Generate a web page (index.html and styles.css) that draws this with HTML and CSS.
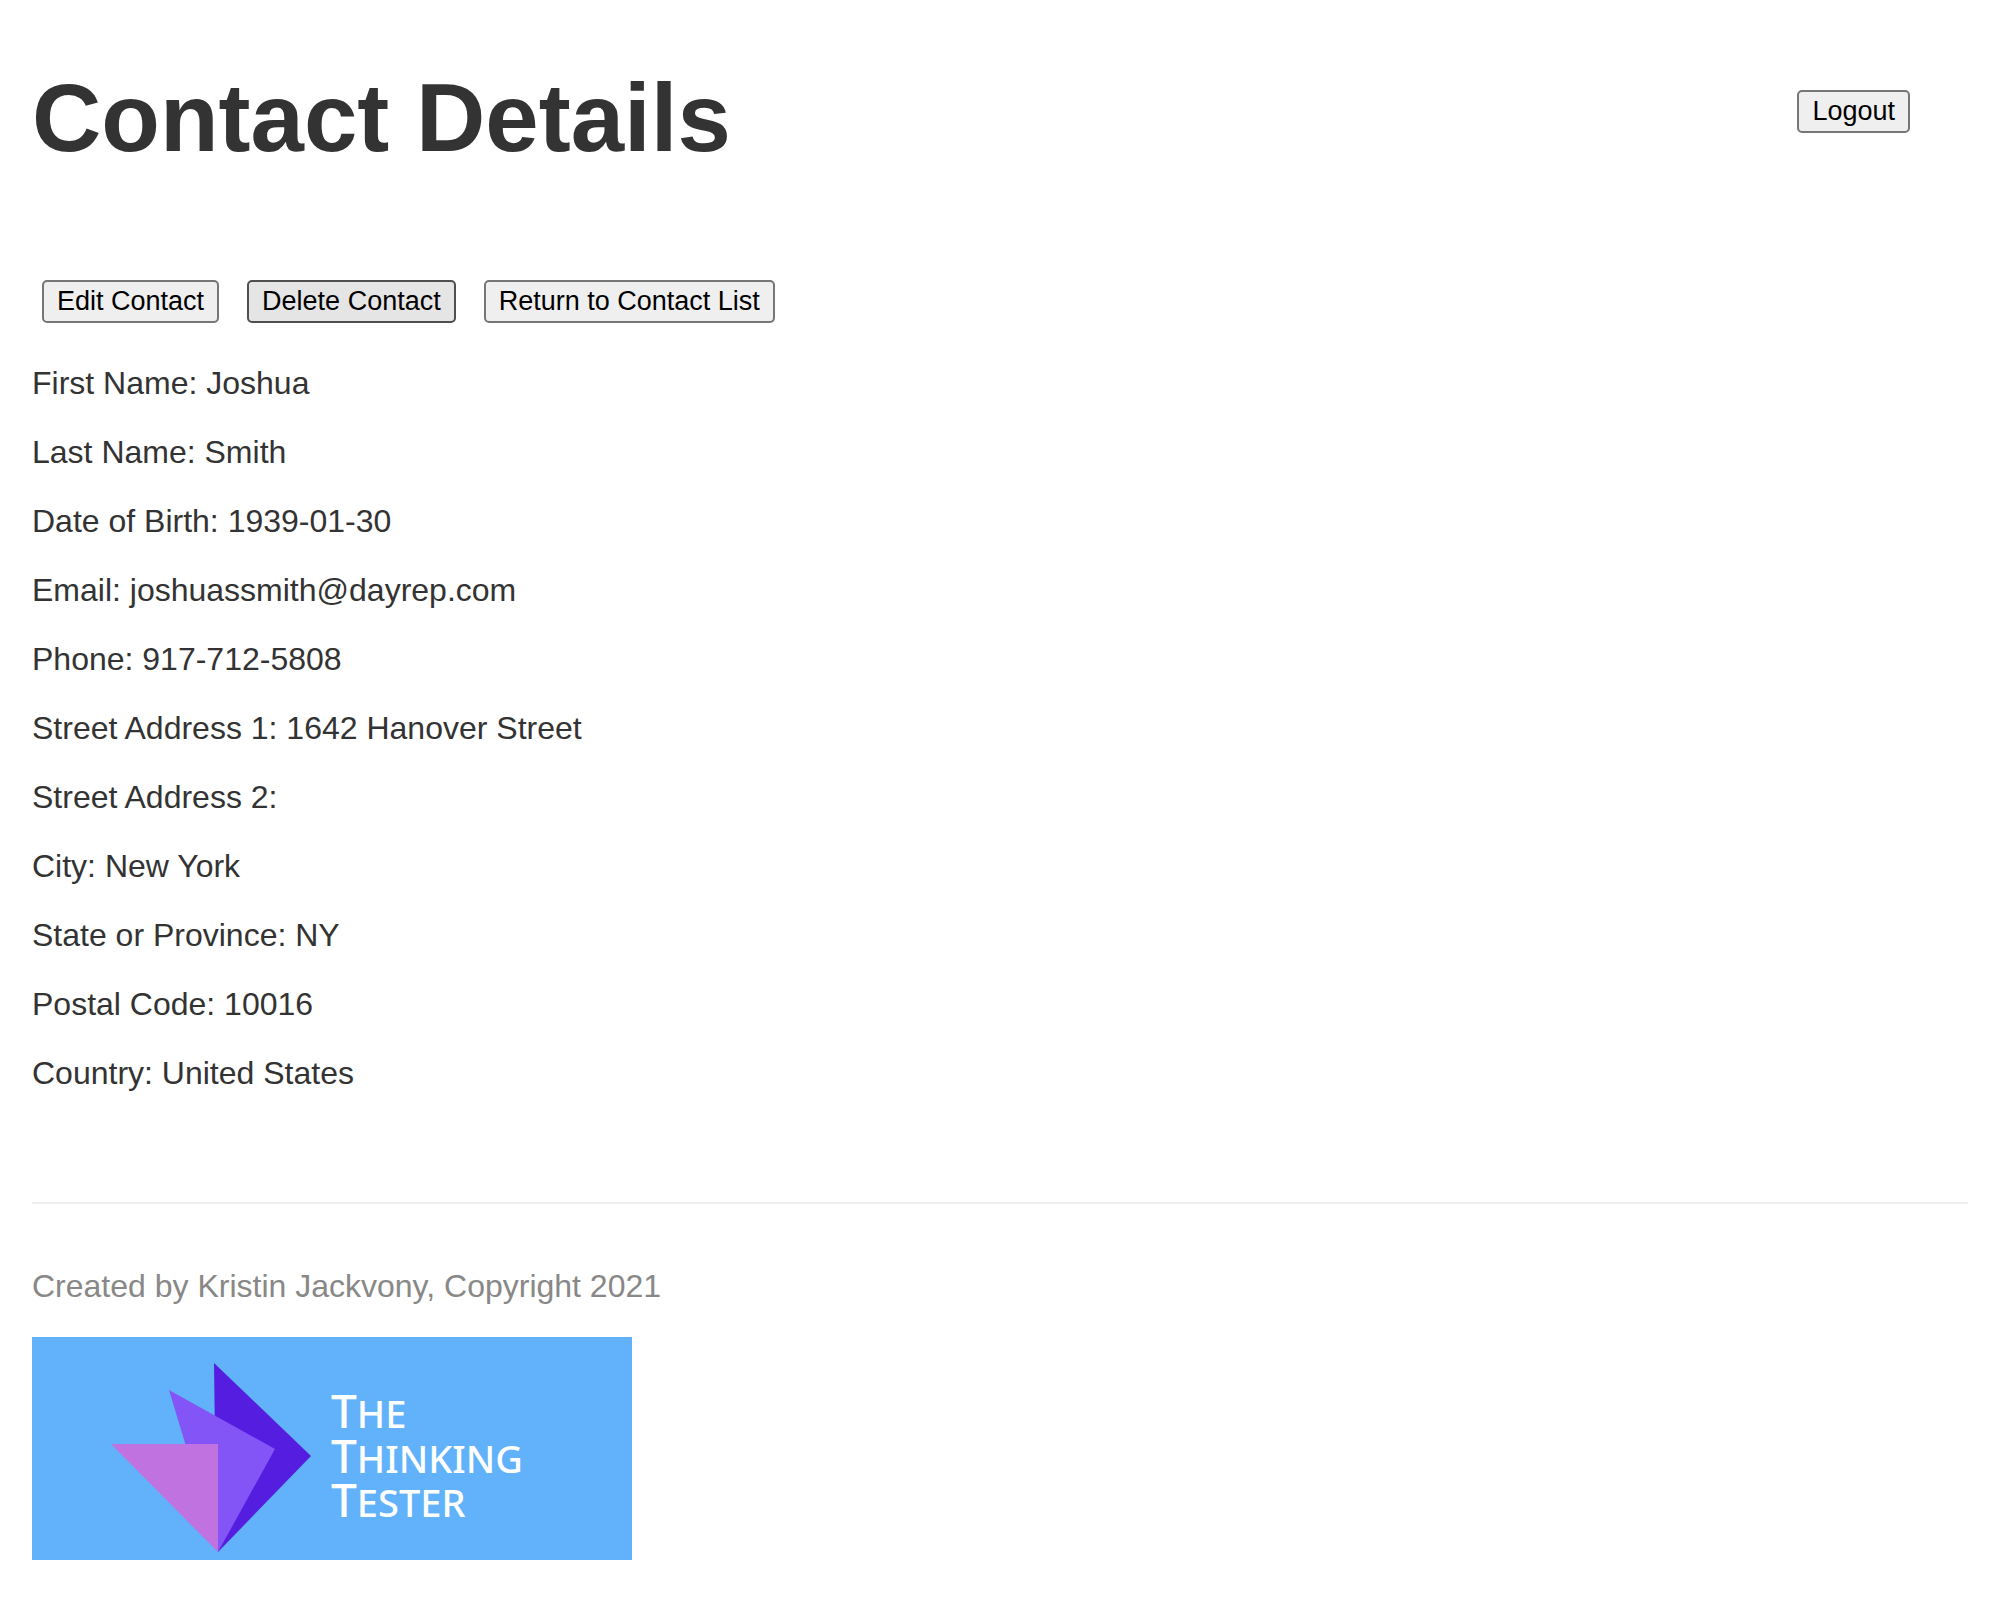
FILE: index.html
```html
<!DOCTYPE html>
<html lang="en">
<head>
<meta charset="utf-8">
<title>Contact Details</title>
<link rel="stylesheet" href="styles.css">
</head>
<body>
<header class="header">
  <h1 class="title">Contact Details</h1>
  <button class="button" type="button">Logout</button>
</header>
<main>
  <div class="actions">
    <button class="button" type="button">Edit Contact</button>
    <button class="button button-hover" type="button">Delete Contact</button>
    <button class="button" type="button">Return to Contact List</button>
  </div>
  <div class="details">
    <p>First Name: <span>Joshua</span></p>
    <p>Last Name: <span>Smith</span></p>
    <p>Date of Birth: <span>1939-01-30</span></p>
    <p>Email: <span>joshuassmith@dayrep.com</span></p>
    <p>Phone: <span>917-712-5808</span></p>
    <p>Street Address 1: <span>1642 Hanover Street</span></p>
    <p>Street Address 2: <span></span></p>
    <p>City: <span>New York</span></p>
    <p>State or Province: <span>NY</span></p>
    <p>Postal Code: <span>10016</span></p>
    <p>Country: <span>United States</span></p>
  </div>
</main>
<footer class="footer">
  <p class="credit">Created by Kristin Jackvony, Copyright 2021</p>
  <svg class="logo" viewBox="0 0 600 223" role="img" aria-label="The Thinking Tester">
    <rect width="600" height="223" fill="#61b2fb"/>
    <path d="M182 26L279 119L186 215L184 180Z" fill="#551de0"/>
    <path d="M137 53L243 112L186 215Z" fill="#8455f6"/>
    <path d="M79 107H186V215Z" fill="#bf72e0"/>
    <g class="logo-text">
      <text x="299" y="91"><tspan>T</tspan><tspan class="small">HE</tspan></text>
      <text x="299" y="136"><tspan>T</tspan><tspan class="small">HINKING</tspan></text>
      <text x="299" y="180"><tspan>T</tspan><tspan class="small">ESTER</tspan></text>
    </g>
  </svg>
</footer>
</body>
</html>
```

FILE: styles.css
```css
body {
  margin: 0;
  padding: 63px 32px 40px;
  background: #fff;
  color: #333;
  font: 32px/37px "Liberation Sans", Arial, sans-serif;
}

.header {
  display: flex;
  align-items: flex-start;
  justify-content: space-between;
  padding-right: 58px;
}

.title {
  margin: 0;
  font-size: 96px;
  line-height: 110px;
}

.header .button {
  margin-top: 27px;
}

.button {
  box-sizing: border-box;
  height: 43px;
  padding: 0 13px;
  border: 2px solid #767676;
  border-radius: 5px;
  background: #efefef;
  color: #000;
  font: 27px/31px "Liberation Sans", Arial, sans-serif;
}

.button-hover {
  border-color: #4f4f4f;
  background: #e5e5e5;
}

.actions {
  display: flex;
  flex-wrap: wrap;
  gap: 28px;
  margin-top: 107px;
  padding-left: 10px;
}

.details {
  margin-top: 42px;
}

.details p {
  margin: 0 0 32px;
}

.footer {
  margin-top: 110px;
  padding-top: 64px;
  border-top: 2px solid #eee;
}

.credit {
  margin: 0 0 32px;
  color: #888;
}

.logo {
  display: block;
  width: 600px;
  max-width: 100%;
}

.logo-text {
  fill: #fff;
  font-family: "Noto Sans", sans-serif;
  font-size: 46px;
  font-weight: 500;
}

.logo-text .small {
  font-size: 38px;
}
```
